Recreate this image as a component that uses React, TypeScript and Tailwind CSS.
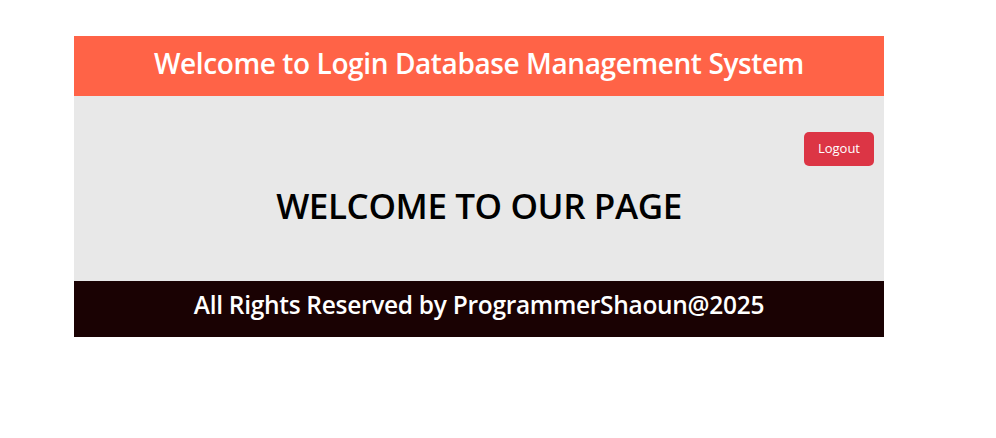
export default function App() {
  return (
    <div className="min-h-screen bg-white pt-9 pl-[74px]" style={{ fontFamily: '"Open Sans", "Noto Sans", sans-serif' }}>
      <div className="w-[810px]">
        <header className="h-[60px] bg-[#ff6347] flex items-center justify-center pb-[6px]">
          <h1 className="text-white text-[28px] font-semibold tracking-[-0.4px]">
            Welcome to Login Database Management System
          </h1>
        </header>
        <main className="h-[185px] bg-[#e8e8e8] flex flex-col">
          <div className="flex justify-end pt-9 pr-[10px]">
            <button className="bg-[#dc3545] text-white text-[13px] px-[14px] h-[34px] rounded-[5px]">
              Logout
            </button>
          </div>
          <div className="flex-1 flex items-center justify-center pb-[34px]">
            <h2 className="text-black text-[35px] font-semibold tracking-[-0.4px]">WELCOME TO OUR PAGE</h2>
          </div>
        </main>
        <footer className="h-[56px] bg-[#1a0203] flex items-center justify-center pb-[8px]">
          <p className="text-white text-[24.5px] font-semibold tracking-[-0.3px]">
            All Rights Reserved by ProgrammerShaoun@2025
          </p>
        </footer>
      </div>
    </div>
  )
}
